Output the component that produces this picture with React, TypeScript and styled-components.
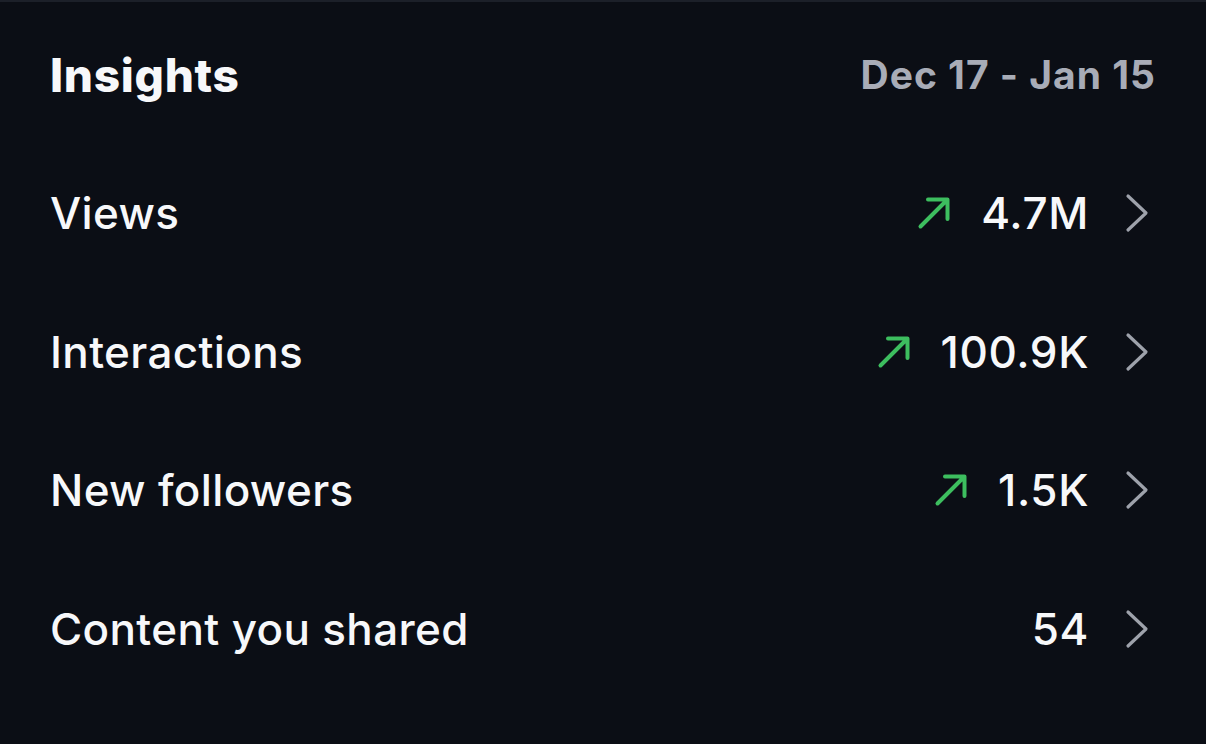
import styled, { createGlobalStyle } from 'styled-components';

const GlobalStyle = createGlobalStyle`
  html, body {
    margin: 0;
    padding: 0;
    background: #0b0e15;
  }
  body {
    font-family: Inter, 'Noto Sans', 'Liberation Sans', sans-serif;
    -webkit-font-smoothing: antialiased;
  }
`;

const Panel = styled.div`
  width: 1206px;
  height: 744px;
  box-sizing: border-box;
  background: #0b0e15;
  border-top: 2px solid #1c2029;
  padding: 0 50px;
  overflow: hidden;
`;

const Header = styled.div`
  height: 142px;
  padding-top: 3px;
  box-sizing: border-box;
  display: flex;
  align-items: center;
  justify-content: space-between;
`;

const Title = styled.h2`
  margin: 0;
  font-size: 46px;
  font-weight: 800;
  color: #f7f8fa;
  letter-spacing: 0.7px;
`;

const DateRange = styled.span`
  font-size: 39px;
  font-weight: 700;
  color: #a8acb7;
  letter-spacing: 1px;
`;

const Row = styled.div`
  height: 138.5px;
  display: flex;
  align-items: center;
  justify-content: space-between;
`;

const Label = styled.span`
  font-size: 44px;
  font-weight: 500;
  color: #f7f8fa;
  letter-spacing: 0.35px;
`;

const Right = styled.div`
  display: flex;
  align-items: center;
`;

const Value = styled.span`
  font-size: 44px;
  font-weight: 500;
  color: #f7f8fa;
  letter-spacing: 0.6px;
  margin-left: 30px;
`;

const Chevron = styled.svg`
  width: 28px;
  height: 40px;
  margin-left: 35px;
  margin-right: 4px;
`;

const TrendIcon = styled.svg`
  width: 34px;
  height: 34px;
`;

function TrendUp() {
  return (
    <TrendIcon viewBox='0 0 34 34' fill='none'>
      <path
        d='M11 3.5H30.5V23M3.5 30.5L29.5 4.5'
        stroke='#3dbe5f'
        strokeWidth='4'
        strokeLinecap='round'
        strokeLinejoin='round'
      />
    </TrendIcon>
  );
}

interface Metric {
  label: string;
  value: string;
  trending?: boolean;
}

const metrics: Metric[] = [
  { label: 'Views', value: '4.7M', trending: true },
  { label: 'Interactions', value: '100.9K', trending: true },
  { label: 'New followers', value: '1.5K', trending: true },
  { label: 'Content you shared', value: '54' },
];

export default function App() {
  return (
    <>
      <GlobalStyle />
      <Panel>
        <Header>
          <Title>Insights</Title>
          <DateRange>Dec 17 - Jan 15</DateRange>
        </Header>
        {metrics.map((m) => (
          <Row key={m.label}>
            <Label>{m.label}</Label>
            <Right>
              {m.trending && <TrendUp />}
              <Value>{m.value}</Value>
              <Chevron viewBox='0 0 28 40' fill='none'>
                <path
                  d='M4 3L22 20L4 37'
                  stroke='#9ea2ab'
                  strokeWidth='3.2'
                  strokeLinecap='round'
                  strokeLinejoin='round'
                />
              </Chevron>
            </Right>
          </Row>
        ))}
      </Panel>
    </>
  );
}
